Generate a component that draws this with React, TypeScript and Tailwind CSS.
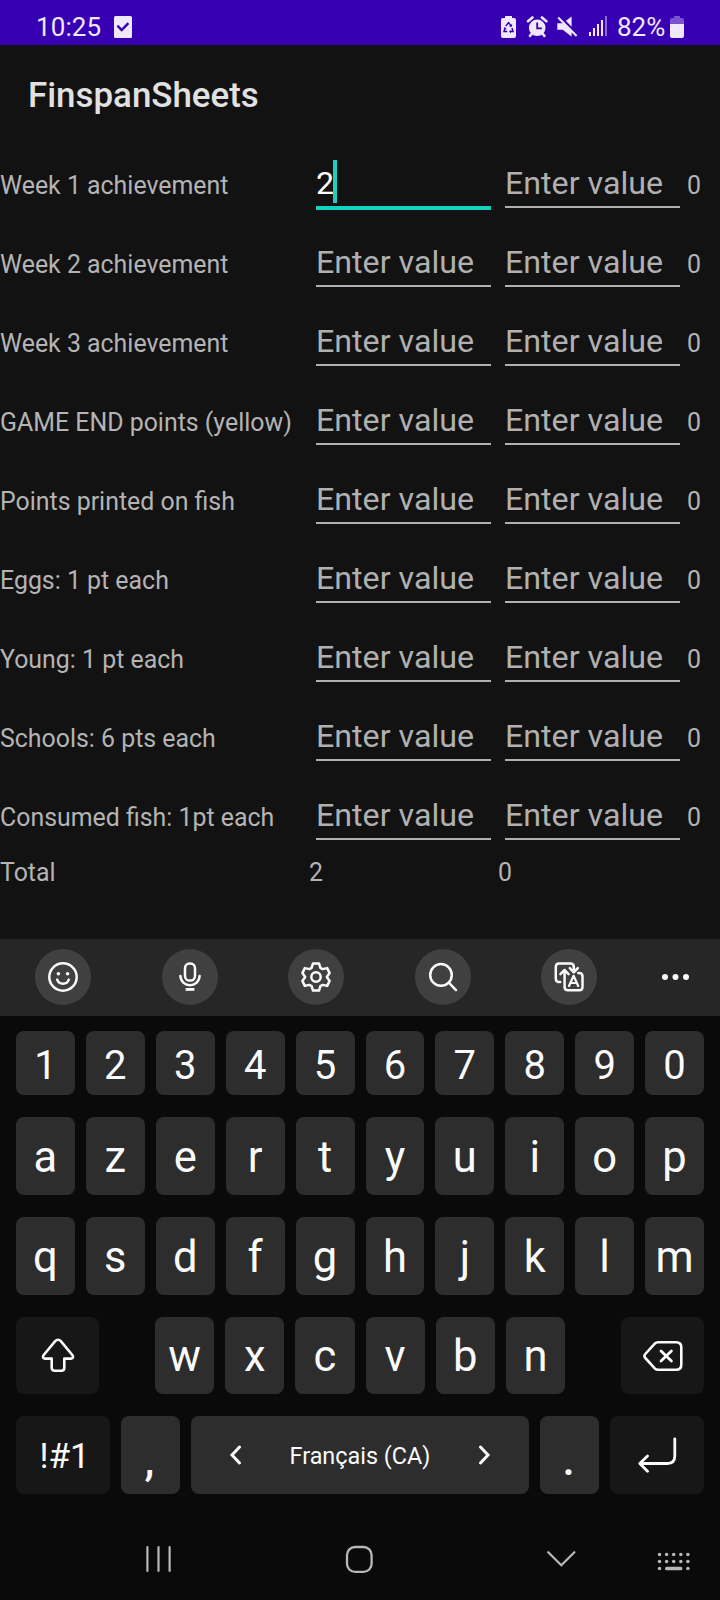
import type { ReactNode } from 'react';

const labels = [
  'Week 1 achievement',
  'Week 2 achievement',
  'Week 3 achievement',
  'GAME END points (yellow)',
  'Points printed on fish',
  'Eggs: 1 pt each',
  'Young: 1 pt each',
  'Schools: 6 pts each',
  'Consumed fish: 1pt each',
];

function StatusBar() {
  return (
    <header className="flex h-[45px] items-start bg-[#3700b3] pl-[36px] text-[26px] leading-[54px] text-[#f0e8fc]">
      <span className="w-[78px] tracking-[0.1px]">10:25</span>
      <svg className="mt-4" width="18" height="22" viewBox="0 0 18 22">
        <rect width="18" height="22" rx="1.5" fill="#f0e8fc" />
        <path d="M3.4 9.6 7.7 14 14.4 7.2" fill="none" stroke="#3700b3" strokeWidth="2.4" />
      </svg>
      <svg className="ml-[369px] mt-4" width="108" height="22" viewBox="0 0 108 22" fill="#f0e8fc">
        <path d="M4 0h7v2h2q2 0 2 2v16q0 2-2 2H2q-2 0-2-2V4q0-2 2-2h2z" />
        <g fill="none" stroke="#3700b3" strokeWidth="1.5">
          <path d="M4.8 10 7.5 6.6l2.7 3.4M11 12l1 3.6H8.8M6.2 15.6H3L4.2 12" />
          <path d="m8.5 10.2 2 .2.1-2M9.9 14.3l-1.3 1.3 1.3 1.3M2.8 12.6l1.4-.9 1 1.6" strokeWidth="1" />
        </g>
        <circle cx="36.2" cy="11.8" r="8.3" />
        <path d="m27 5.2 4.5-3.7M45.4 5.2l-4.5-3.7M31 17.5l-2 2.3M41.4 17.5l2 2.3" stroke="#f0e8fc" strokeWidth="2.6" fill="none" strokeLinecap="round" />
        <path d="M36.2 6.5v5.8h4.6" fill="none" stroke="#3700b3" strokeWidth="1.8" />
        <path d="M56.3 7.2h5.4l8.9-6.7v20.1l-8.9-6.8h-5.4z" />
        <path d="m57.5-.4 19.5 19.6" stroke="#3700b3" strokeWidth="3" />
        <path d="m57.2 1.6 18.4 18.4" stroke="#f0e8fc" strokeWidth="2.1" />
        <path d="M88 16h2v4h-2zM92 12h2v8h-2zM96 8h2v12h-2zM100 4h2v16h-2z" />
        <path d="M104 0h2v20h-2z" opacity=".45" />
      </svg>
      <span className="ml-[8px] w-[53px] whitespace-nowrap">82%</span>
      <svg className="mt-4 shrink-0" width="14" height="22" viewBox="0 0 14 22">
        <path d="M4 0h6v2h2q2 0 2 2v5H0V4q0-2 2-2h2z" fill="#7b52cf" />
        <path d="M0 8h14v12q0 2-2 2H2q-2 0-2-2z" fill="#f0e8fc" />
      </svg>
    </header>
  );
}

function Field({ focused }: { focused?: boolean }) {
  if (focused) {
    return (
      <div className="relative ml-[7px] mt-4 w-[175px]">
        <input
          aria-label="value"
          defaultValue="2"
          className="block h-[50px] w-full rounded-none border-b-4 border-[#12d2c0] bg-transparent p-0 text-[32.2px] leading-[38px] text-white outline-none"
        />
        <span className="absolute left-[17px] top-0 h-[43px] w-1 bg-[#1ecfbe]" />
      </div>
    );
  }
  return (
    <input
      aria-label="value"
      placeholder="Enter value"
      className="ml-[7px] mt-4 block h-12 w-[175px] rounded-none border-b-2 border-[#b0b0b0] bg-transparent p-0 text-[32.2px] leading-[38px] text-white outline-none placeholder:text-[#b0b0b0]"
    />
  );
}

function Sheet() {
  return (
    <main className="h-[795px] text-[24.9px] text-[#b4b4b4]">
      {labels.map((label, i) => (
        <div key={label} className="grid h-[79px] grid-cols-[309px_189px_189px_1fr] items-start">
          <span className="whitespace-nowrap pt-[2px] leading-[79px]">{label}</span>
          <Field focused={i === 0} />
          <Field />
          <span className="pt-[2px] leading-[79px]">0</span>
        </div>
      ))}
      <div className="grid grid-cols-[309px_189px_189px_1fr] pt-[3px] leading-[30px]">
        <span>Total</span>
        <span>2</span>
        <span>0</span>
      </div>
    </main>
  );
}

function Round({ children }: { children: ReactNode }) {
  return (
    <div className="flex size-14 items-center justify-center rounded-full bg-[#404040]">
      <svg width="32" height="32" viewBox="0 0 32 32" fill="none" stroke="#fafafa" strokeWidth="2.5" strokeLinecap="round" strokeLinejoin="round">
        {children}
      </svg>
    </div>
  );
}

function Toolbar() {
  return (
    <div className="flex h-[77px] items-center bg-[#262626] pb-[1px] pl-[35px]">
      <div className="flex w-[562px] justify-between">
        <Round>
          <circle cx="16" cy="16" r="13.7" />
          <circle cx="11.4" cy="12.8" r="1.8" fill="#fafafa" stroke="none" />
          <circle cx="20.6" cy="12.8" r="1.8" fill="#fafafa" stroke="none" />
          <path d="M10.2 18.6c1.8 5.4 9.8 5.4 11.6 0" />
        </Round>
        <Round>
          <rect x="11" y="2.6" width="10" height="17" rx="4.6" />
          <path d="M6.4 15c.8 12.2 18.4 12.2 19.2 0" />
          <path d="M11.6 28.4h8.8" strokeWidth="2.8" strokeLinecap="butt" />
        </Round>
        <Round>
          <path d="M13 2.4h6l1.4 4.5 2.2 1.2 4.6-1 2.4 5-2.8 3.9 2.8 3.9-2.4 5-4.6-1-2.2 1.2-1.4 4.5h-6l-1.4-4.5-2.2-1.2-4.6 1-2.4-5L5.2 16l-2.8-3.9 2.4-5 4.6 1 2.2-1.2z" />
          <circle cx="16" cy="16" r="4.7" />
        </Round>
        <Round>
          <circle cx="14" cy="13.9" r="10.8" />
          <path d="m21.8 21.7 7.2 7.4" />
        </Round>
        <Round>
          <path d="M7.2 21H6q-3.2 0-3.2-3.2V6Q2.8 2.5 6 2.5h11.4q3.4 0 3.4 3.4v5.2M16.8 7.2l4 4.2 4-4.2" />
          <path d="M7.4 13.2 11.6 9l4 4.2M11.6 9.3v16.6q0 3.4 3.4 3.4h11.2q3.3 0 3.3-3.4V15.3q0-3.2-3.3-3.3h-.9" />
          <path d="m16 25 4.6-10.2L25.2 25M17.6 22h6" strokeWidth="2.2" />
        </Round>
      </div>
      <svg className="ml-[64px]" width="30" height="8" viewBox="0 0 30 8" fill="#fafafa">
        <circle cx="4" cy="4" r="3" />
        <circle cx="14.5" cy="4" r="3" />
        <circle cx="25" cy="4" r="3" />
      </svg>
    </div>
  );
}

const keyBase = 'flex justify-center rounded-[8px] overflow-hidden';

function LetterRow({ keys }: { keys: string }) {
  return (
    <div className="mt-[22px] grid h-[78px] grid-cols-10 gap-[11px]">
      {keys.split('').map((k) => (
        <div key={k} className={`${keyBase} bg-[#2d2d2d] text-[43.5px] leading-[81px]`}>{k}</div>
      ))}
    </div>
  );
}

function Keyboard() {
  return (
    <section className="h-[504px] px-4 pt-[15px] text-[#fafafa]">
      <div className="grid h-16 grid-cols-10 gap-[11px]">
        {'1234567890'.split('').map((k) => (
          <div key={k} className={`${keyBase} bg-[#2d2d2d] text-[40px] leading-[70px]`}>{k}</div>
        ))}
      </div>
      <LetterRow keys="azertyuiop" />
      <LetterRow keys="qsdfghjklm" />
      <div className="mt-[22px] flex h-[77px]">
        <div className={`${keyBase} w-[83px] items-center bg-[#171717]`}>
          <svg width="34" height="36" viewBox="0 0 34 36" fill="none" stroke="#fafafa" strokeWidth="2.6" strokeLinejoin="round">
            <path d="M14.2 3.2q2.8-2.8 5.6 0L31.3 17q2 3.2-1.4 3.6H23.3v9.2q0 3-3 3h-6.6q-3 0-3-3v-9.2H4.1q-3.4-.4-1.4-3.6z" />
          </svg>
        </div>
        <div className="ml-[56px] grid w-[410px] grid-cols-6 gap-[11px]">
          {'wxcvbn'.split('').map((k) => (
            <div key={k} className={`${keyBase} bg-[#2d2d2d] text-[43.5px] leading-[79px]`}>{k}</div>
          ))}
        </div>
        <div className={`${keyBase} ml-[56px] w-[83px] items-center bg-[#171717]`}>
          <svg width="40" height="32" viewBox="0 0 40 32" fill="none" stroke="#fafafa" strokeWidth="2.6" strokeLinecap="round" strokeLinejoin="round">
            <path d="M15 2.2h18q5.3 0 5.3 5v17.6q0 5-5.3 5H15q-1.8 0-3-1.2L2.3 18q-1.8-2 0-4L12 3.4q1.2-1.2 3-1.2z" />
            <path d="m18 11 10.4 10M28.4 11 18 21" strokeWidth="2.8" />
          </svg>
        </div>
      </div>
      <div className="mt-[22px] flex h-[78px] gap-[11px]">
        <div className={`${keyBase} w-[94px] bg-[#171717] pl-[3px] text-[35px] leading-[81px]`}>!#1</div>
        <div className={`${keyBase} w-[59px] bg-[#2d2d2d] pr-[2px] text-[44px] font-medium leading-[88px]`}>,</div>
        <div className={`${keyBase} w-[338px] items-center bg-[#2d2d2d] text-[23.4px]`}>
          <svg width="12" height="20" viewBox="0 0 12 20" fill="none" stroke="#fafafa" strokeWidth="3" strokeLinecap="round">
            <path d="M9.5 2 2 10l7.5 8" />
          </svg>
          <span className="w-[236px] pt-[4px] text-center">Français (CA)</span>
          <svg width="12" height="20" viewBox="0 0 12 20" fill="none" stroke="#fafafa" strokeWidth="3" strokeLinecap="round">
            <path d="m2.5 2 7.5 8-7.5 8" />
          </svg>
        </div>
        <div className={`${keyBase} w-[59px] bg-[#2d2d2d] pr-[2px] text-[44px] font-medium leading-[88px]`}>.</div>
        <div className={`${keyBase} w-[94px] items-center bg-[#171717]`}>
          <svg width="40" height="36" viewBox="0 0 40 36" fill="none" stroke="#fafafa" strokeWidth="2.8" strokeLinecap="round" strokeLinejoin="round">
            <path d="M37.8 2v17q0 7.5-7.5 7.5H3M10.5 19 2.8 26.5l7.7 7.7" />
          </svg>
        </div>
      </div>
    </section>
  );
}

function NavBar() {
  return (
    <nav className="flex h-20 items-start pl-[146px] pt-[24px] text-[#b8b8b8]">
      <svg width="26" height="30" viewBox="0 0 26 30" stroke="currentColor" strokeWidth="2.2" strokeLinecap="round">
        <path d="M1.4 3v24M12.5 3v24M23.6 3v24" />
      </svg>
      <svg className="ml-[172px]" width="30" height="30" viewBox="0 0 30 30" fill="none" stroke="currentColor" strokeWidth="2.3">
        <rect x="3" y="3" width="24.6" height="24.8" rx="8" />
      </svg>
      <svg className="ml-[172px]" width="32" height="30" viewBox="0 0 32 30" fill="none" stroke="currentColor" strokeWidth="2.3" strokeLinecap="round">
        <path d="m2.2 8.2 13.1 13 13.1-13" />
      </svg>
      <svg className="ml-[79px]" width="34" height="30" viewBox="0 0 34 30" fill="currentColor">
        {[0, 1, 2, 3, 4].map((c) => (
          <g key={c}>
            <circle cx={2.5 + c * 7.1} cy="10.4" r="1.75" />
            <circle cx={2.5 + c * 7.1} cy="17.4" r="1.75" />
          </g>
        ))}
        <circle cx="2.5" cy="24.5" r="1.75" />
        <rect x="8" y="22.7" width="17.4" height="3.6" rx="1.6" />
        <circle cx="30.9" cy="24.5" r="1.75" />
      </svg>
    </nav>
  );
}

export default function App() {
  return (
    <div className="h-[1600px] w-[720px] overflow-hidden bg-[#121212] font-['Roboto',sans-serif]">
      <StatusBar />
      <h1 className="h-[99px] pl-[28px] text-[34.9px] font-medium leading-[101px] text-[#e1e1e1]">FinspanSheets</h1>
      <Sheet />
      <div className="bg-[#0a0a0a]">
        <Toolbar />
        <Keyboard />
        <NavBar />
      </div>
    </div>
  );
}
